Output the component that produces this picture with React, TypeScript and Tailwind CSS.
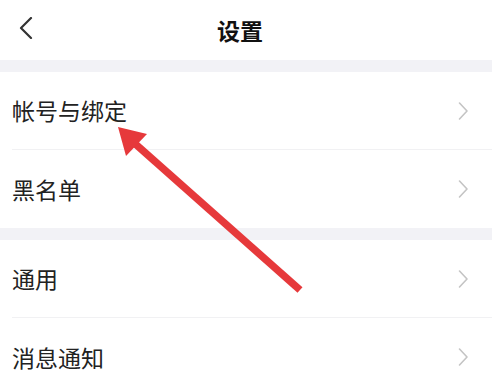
const rows = [
  ["帐号与绑定", "黑名单"],
  ["通用", "消息通知"],
];

function Chevron() {
  return (
    <svg width="13" height="20" viewBox="0 0 13 20" fill="none" className="mr-[22px]">
      <path d="M2.5 2 L10 10 L2.5 18" stroke="#c4c4c4" strokeWidth="1.6" strokeLinecap="round" strokeLinejoin="round" />
    </svg>
  );
}

export default function App() {
  return (
    <div
      className="relative h-[379px] w-[492px] overflow-hidden bg-white text-[#222]"
      style={{ fontFamily: '"Noto Sans CJK SC", "Noto Sans", sans-serif' }}
    >
      <header className="relative flex h-[60px] items-center justify-center">
        <button className="absolute left-[18px] top-[17px]">
          <svg width="16" height="22" viewBox="0 0 16 22" fill="none">
            <path d="M13 1 L3 11 L13 21" stroke="#333" strokeWidth="2.2" strokeLinecap="round" strokeLinejoin="round" />
          </svg>
        </button>
        <h1 className="mr-3 text-[23px] font-bold leading-none text-[#111]">设置</h1>
      </header>

      {rows.map((group, gi) => (
        <section key={gi}>
          <div className="h-[12px] bg-[#f2f2f6]" />
          {group.map((label, i) => (
            <div key={label} className="pl-[12px]">
              <div
                className={`flex h-[78px] items-center justify-between ${
                  i === 0 ? "border-b border-[#f1f1f3]" : ""
                }`}
              >
                <span className="text-[23px] leading-none">{label}</span>
                <Chevron />
              </div>
            </div>
          ))}
        </section>
      ))}

      <svg className="pointer-events-none absolute left-0 top-0" width="492" height="379" viewBox="0 0 492 379">
        <line x1="132" y1="141" x2="300" y2="290" stroke="#e6393b" strokeWidth="7.5" />
        <polygon points="118,127 147,134 126,156" fill="#e6393b" />
      </svg>
    </div>
  );
}
